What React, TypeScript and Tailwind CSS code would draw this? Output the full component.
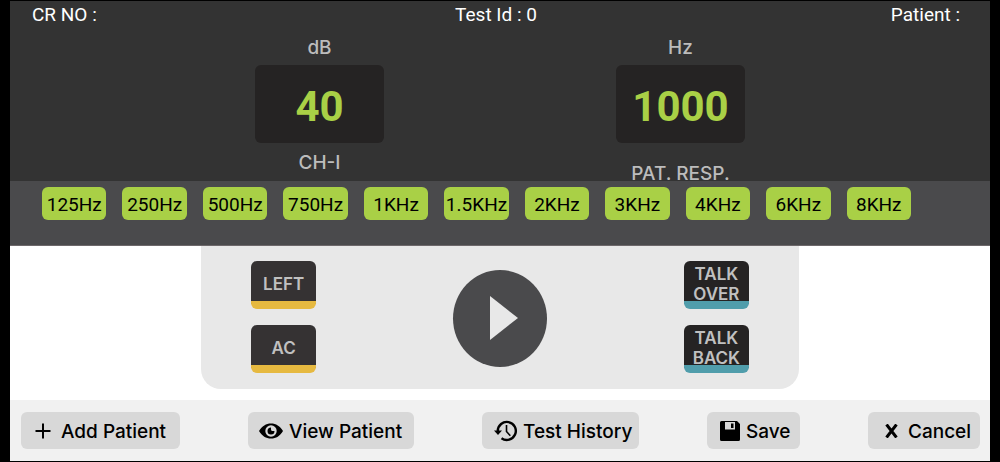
import type { ReactNode } from 'react';

const FREQUENCIES = ['125Hz', '250Hz', '500Hz', '750Hz', '1KHz', '1.5KHz', '2KHz', '3KHz', '4KHz', '6KHz', '8KHz'];

function Readout({ label, value, children }: { label: string; value: string; children: ReactNode }) {
  return (
    <section className="flex flex-col items-center text-[#bcbcbc] text-[19px] leading-6 font-medium">
      <h2>{label}</h2>
      <output className="mt-[5px] flex h-[78px] w-[129px] items-center justify-center rounded-md bg-[#252323] pt-1.5 font-['Roboto',sans-serif] text-[42px] font-bold text-[#a9d046]">
        {value}
      </output>
      {children}
    </section>
  );
}

function KeyButton({ children, className }: { children: ReactNode; className: string }) {
  return (
    <button
      type="button"
      className={`flex h-12 w-[65px] items-center justify-center rounded-md border-b-8 pt-1.5 text-[17px] leading-5 font-semibold text-[#c0c0c0] ${className}`}
    >
      {children}
    </button>
  );
}

function ActionButton({ icon, label, className }: { icon: ReactNode; label: string; className: string }) {
  return (
    <button
      type="button"
      className={`flex h-[37px] items-center rounded-md bg-[#d8d8d8] text-[19px] font-medium whitespace-nowrap text-black ${className}`}
    >
      {icon}
      <span className="pt-1">{label}</span>
    </button>
  );
}

function PlusIcon() {
  return (
    <svg width="16" height="16" viewBox="0 0 16 16" stroke="currentColor" strokeWidth="2" aria-hidden="true">
      <path d="M8 0.500v15M0.500 8h15" />
    </svg>
  );
}

function EyeIcon() {
  return (
    <svg width="24" height="16" viewBox="0 0 24 16" aria-hidden="true">
      <path fillRule="evenodd" d="M0 8C3 3 7 .5 12 .5S21 3 24 8c-3 5-7 7.500-12 7.500S3 13 0 8Zm12-5.700a5.700 5.700 0 1 0 0 11.400 5.700 5.700 0 0 0 0-11.400Z" />
      <path d="M12 4.500a3.500 3.500 0 1 0 3.500 3.500h-2.300A1.800 1.800 0 0 1 12 6.200Z" />
    </svg>
  );
}

function HistoryIcon() {
  return (
    <svg width="23" height="22" viewBox="0 0 23 22" fill="none" stroke="currentColor" aria-hidden="true">
      <path strokeWidth="2.400" d="M3.800 11a9 9 0 1 1 3.700 7.200" />
      <path fill="currentColor" stroke="none" d="M0 10.500h8L4 15Z" />
      <path strokeWidth="1.600" d="M12.500 5v6.500l3.800 4.200" />
    </svg>
  );
}

function SaveIcon() {
  return (
    <svg width="20" height="20" viewBox="0 0 20 20" aria-hidden="true">
      <path fillRule="evenodd" d="M1.500 0H17l3 3v15.500a1.500 1.500 0 0 1-1.500 1.500h-17A1.500 1.500 0 0 1 0 18.500v-17A1.500 1.500 0 0 1 1.500 0ZM5 1v7.500h10V1Z" />
      <path d="M11 2.500h2.500v4.500H11Z" />
    </svg>
  );
}

function CrossIcon() {
  return (
    <svg width="13" height="14" viewBox="0 0 13 14" stroke="currentColor" strokeWidth="3" aria-hidden="true">
      <path d="m1.500 0.500 10 13M11.500 0.500l-10 13" />
    </svg>
  );
}

export default function App() {
  return (
    <div className="bg-black px-2.5 py-px font-['Inter',sans-serif]">
      <header className="h-[180px] bg-[#333333]">
        <div className="grid grid-cols-3 pt-0.5 pr-[30px] pl-[22px] font-['Roboto',sans-serif] text-[19px] leading-6 text-white">
          <span>CR NO :</span>
          <span className="text-center">Test Id : 0</span>
          <span className="text-right">Patient :</span>
        </div>
        <div className="mx-auto mt-[9px] flex w-1/2 justify-between">
          <Readout label="dB" value="40">
            <p className="mt-2">CH-I</p>
          </Readout>
          <Readout label="Hz" value="1000">
            <p className="mt-[19px]">PAT. RESP.</p>
          </Readout>
        </div>
      </header>

      <nav
        aria-label="Frequency"
        className="grid h-[65px] grid-cols-11 items-start gap-4 border-b border-[#6d686a] bg-[#4a4a4c] pt-1.5 pr-[79px] pl-8"
      >
        {FREQUENCIES.map((freq) => (
          <button
            key={freq}
            type="button"
            className="flex h-[33px] items-center justify-center rounded-md bg-[#a9d046] pt-1 font-['Roboto',sans-serif] text-[19px] text-black"
          >
            {freq}
          </button>
        ))}
      </nav>

      <main className="bg-white pb-[11px]">
        <div className="mx-auto flex w-[61%] items-center justify-between rounded-b-[20px] bg-[#e8e8e8] px-[50px] pt-[15px] pb-4">
          <div className="flex flex-col gap-4">
            <KeyButton className="border-[#e6b940] bg-[#353233]">LEFT</KeyButton>
            <KeyButton className="border-[#e6b940] bg-[#353233]">AC</KeyButton>
          </div>
          <button type="button" aria-label="Play" className="mt-0.5 flex h-[97px] w-[94px] items-center justify-center rounded-[50%] bg-[#4a4a4c] pl-2">
            <svg width="28" height="44" viewBox="0 0 28 44" fill="#e8e8e8" aria-hidden="true">
              <path d="M0 0l28 22L0 44Z" />
            </svg>
          </button>
          <div className="flex flex-col gap-4">
            <KeyButton className="border-[#509dab] bg-[#252323]">
              TALK
              <br />
              OVER
            </KeyButton>
            <KeyButton className="border-[#509dab] bg-[#252323]">
              TALK
              <br />
              BACK
            </KeyButton>
          </div>
        </div>
      </main>

      <footer className="flex justify-between bg-[#f1f1f1] pt-3 pr-2.5 pb-3 pl-[11px]">
        <ActionButton icon={<PlusIcon />} label="Add Patient" className="w-[159px] gap-2.5 pl-3.5" />
        <ActionButton icon={<EyeIcon />} label="View Patient" className="w-[166px] gap-1.5 pl-[11px]" />
        <ActionButton icon={<HistoryIcon />} label="Test History" className="w-[157px] gap-1.5 pl-3" />
        <ActionButton icon={<SaveIcon />} label="Save" className="w-[93px] gap-1.5 pl-[13px]" />
        <ActionButton icon={<CrossIcon />} label="Cancel" className="w-[112px] gap-2.5 pl-[17px]" />
      </footer>
    </div>
  );
}
